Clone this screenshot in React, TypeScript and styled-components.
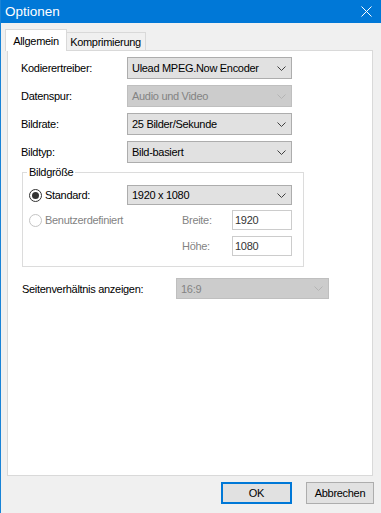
import React from "react";
import styled, { createGlobalStyle } from "styled-components";

const GlobalStyle = createGlobalStyle`
  body {
    margin: 0;
    background: #f0f0f0;
    font-family: "Liberation Sans", Arial, sans-serif;
    font-size: 11px;
    letter-spacing: -0.3px;
    color: #000;
  }
`;

const Window = styled.div`
  width: 381px;
  height: 513px;
  box-sizing: border-box;
  border-left: 1px solid #1883d7;
  background: #f0f0f0;
  display: flex;
  flex-direction: column;
`;

const TitleBar = styled.div`
  height: 23px;
  flex: none;
  background: #0078d7;
  color: #fff;
  display: flex;
  align-items: center;
  justify-content: space-between;
  padding: 0 9px 0 4px;
`;

const Title = styled.span`
  font-size: 13.5px;
  letter-spacing: 0;
  padding-bottom: 1px;
`;

const Body = styled.div`
  flex: 1;
  display: flex;
  flex-direction: column;
  padding: 6px 8px 0 6px;
`;

const TabStrip = styled.div`
  height: 21px;
  display: flex;
  align-items: flex-end;
`;

const Tab = styled.div<{ $active?: boolean }>`
  box-sizing: border-box;
  position: relative;
  display: flex;
  align-items: center;
  justify-content: center;
  border: 1px solid #d9d9d9;
  border-bottom: none;
  background: ${(p) => (p.$active ? "#fff" : "#f0f0f0")};
  width: ${(p) => (p.$active ? "62px" : "81px")};
  height: ${(p) => (p.$active ? "22px" : "18px")};
  margin: ${(p) => (p.$active ? "0 -2px -1px -2px" : "0")};
  z-index: ${(p) => (p.$active ? 1 : 0)};
  padding-top: ${(p) => (p.$active ? "0" : "1px")};
`;

const Panel = styled.div`
  box-sizing: border-box;
  height: 426px;
  background: #fff;
  border: 1px solid #d9d9d9;
  padding: 6px 0 0 13px;
  display: flex;
  flex-direction: column;
`;

const FieldRow = styled.div`
  display: flex;
  align-items: center;
  height: 22px;
  & + & {
    margin-top: 6px;
  }
`;

const Label = styled.span<{ $width: number; $disabled?: boolean }>`
  width: ${(p) => p.$width}px;
  flex: none;
  color: ${(p) => (p.$disabled ? "#838383" : "#000")};
`;

const SelectBox = styled.div<{ $width: number; $height: number; $disabled?: boolean }>`
  box-sizing: border-box;
  width: ${(p) => p.$width}px;
  height: ${(p) => p.$height}px;
  border: 1px solid ${(p) => (p.$disabled ? "#bfbfbf" : "#adadad")};
  background: ${(p) => (p.$disabled ? "#cccccc" : "#e1e1e1")};
  color: ${(p) => (p.$disabled ? "#838383" : "#000")};
  display: flex;
  align-items: center;
  justify-content: space-between;
  padding: 0 5px 0 4px;
`;

const Chevron = ({ disabled }: { disabled?: boolean }) => (
  <svg width="9" height="5" viewBox="0 0 9 5">
    <path
      d="M0.5 0.5 L4.5 4.5 L8.5 0.5"
      fill="none"
      stroke={disabled ? "#b4b4b4" : "#404040"}
      strokeWidth="1"
    />
  </svg>
);

const Select = ({
  value,
  width,
  height = 22,
  disabled,
}: {
  value: string;
  width: number;
  height?: number;
  disabled?: boolean;
}) => (
  <SelectBox $width={width} $height={height} $disabled={disabled}>
    <span>{value}</span>
    <Chevron disabled={disabled} />
  </SelectBox>
);

const Group = styled.fieldset`
  box-sizing: border-box;
  width: 282px;
  margin: 3px 0 0 1px;
  padding: 6px 11px 10px 6px;
  border: 1px solid #dcdcdc;
  min-width: 0;
`;

const Legend = styled.legend`
  padding: 0 2px;
  margin-left: -2px;
  line-height: 13px;
`;

const GroupRow = styled.div<{ $gap?: number }>`
  display: flex;
  align-items: flex-start;
  margin-top: ${(p) => p.$gap ?? 0}px;
`;

const RadioLabel = styled.label<{ $width: number; $disabled?: boolean }>`
  width: ${(p) => p.$width}px;
  height: 20px;
  flex: none;
  display: flex;
  align-items: center;
  gap: 3px;
  color: ${(p) => (p.$disabled ? "#838383" : "#000")};
`;

const RadioCircle = styled.span<{ $checked?: boolean; $disabled?: boolean }>`
  box-sizing: border-box;
  width: 13px;
  height: 13px;
  border-radius: 50%;
  border: 1px solid ${(p) => (p.$disabled ? "#c4c4c4" : "#333")};
  background: #fff;
  display: flex;
  align-items: center;
  justify-content: center;
  &::after {
    content: "";
    width: 7px;
    height: 7px;
    border-radius: 50%;
    background: ${(p) => (p.$checked ? "#333" : "transparent")};
  }
`;

const SizeFields = styled.div`
  display: flex;
  flex-direction: column;
  gap: 6px;
`;

const InputRow = styled.div`
  display: flex;
  align-items: center;
`;

const TextInput = styled.div`
  box-sizing: border-box;
  width: 60px;
  height: 20px;
  border: 1px solid #cccccc;
  background: #fff;
  color: #333;
  display: flex;
  align-items: center;
  padding-left: 2px;
`;

const AspectRow = styled(FieldRow)`
  margin-top: 11px;
  height: 21px;
  padding-left: 1px;
`;

const ButtonBar = styled.div`
  display: flex;
  justify-content: flex-end;
  gap: 14px;
  margin: 6px -1px 0 0;
`;

const Button = styled.div<{ $width: number; $primary?: boolean }>`
  box-sizing: border-box;
  width: ${(p) => p.$width}px;
  height: 22px;
  background: #e1e1e1;
  border: 1px solid ${(p) => (p.$primary ? "#0078d7" : "#adadad")};
  box-shadow: ${(p) => (p.$primary ? "inset 0 0 0 1px #0078d7" : "none")};
  display: flex;
  align-items: center;
  justify-content: center;
`;

const CloseIcon = () => (
  <svg width="11" height="11" viewBox="0 0 11 11">
    <path d="M0.5 0.5 L10.5 10.5 M10.5 0.5 L0.5 10.5" stroke="#fff" strokeWidth="1" />
  </svg>
);

export default function App() {
  return (
    <>
      <GlobalStyle />
      <Window>
        <TitleBar>
          <Title>Optionen</Title>
          <CloseIcon />
        </TitleBar>
        <Body>
          <TabStrip>
            <Tab $active>Allgemein</Tab>
            <Tab>Komprimierung</Tab>
          </TabStrip>
          <Panel>
            <FieldRow>
              <Label $width={106}>Kodierertreiber:</Label>
              <Select value="Ulead MPEG.Now Encoder" width={165} />
            </FieldRow>
            <FieldRow>
              <Label $width={106}>Datenspur:</Label>
              <Select value="Audio und Video" width={165} disabled />
            </FieldRow>
            <FieldRow>
              <Label $width={106}>Bildrate:</Label>
              <Select value="25 Bilder/Sekunde" width={165} />
            </FieldRow>
            <FieldRow>
              <Label $width={106}>Bildtyp:</Label>
              <Select value="Bild-basiert" width={165} />
            </FieldRow>

            <Group>
              <Legend>Bildgröße</Legend>
              <GroupRow>
                <RadioLabel $width={98}>
                  <RadioCircle $checked />
                  Standard:
                </RadioLabel>
                <Select value="1920 x 1080" width={165} height={20} />
              </GroupRow>
              <GroupRow $gap={5}>
                <RadioLabel $width={153} $disabled>
                  <RadioCircle $disabled />
                  Benutzerdefiniert
                </RadioLabel>
                <SizeFields>
                  <InputRow>
                    <Label $width={50} $disabled>Breite:</Label>
                    <TextInput>1920</TextInput>
                  </InputRow>
                  <InputRow>
                    <Label $width={50} $disabled>Höhe:</Label>
                    <TextInput>1080</TextInput>
                  </InputRow>
                </SizeFields>
              </GroupRow>
            </Group>

            <AspectRow>
              <Label $width={154}>Seitenverhältnis anzeigen:</Label>
              <Select value="16:9" width={153} height={21} disabled />
            </AspectRow>
          </Panel>
          <ButtonBar>
            <Button $width={71} $primary>OK</Button>
            <Button $width={68}>Abbrechen</Button>
          </ButtonBar>
        </Body>
      </Window>
    </>
  );
}
